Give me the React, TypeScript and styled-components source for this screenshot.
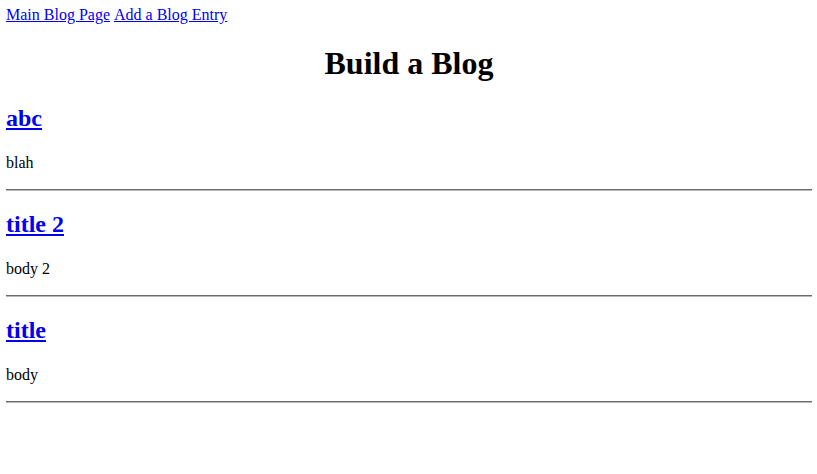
import React from "react";
import styled, { createGlobalStyle } from "styled-components";

const Global = createGlobalStyle`
  html, body { background: #fff; }
  body {
    margin: 6px 5px 6px 6px;
    font-family: "Liberation Serif", "Times New Roman", serif;
    font-size: 16px;
    color: #000;
  }
`;

const Nav = styled.nav`
  display: flex;
  gap: 4px;
  line-height: 18px;
`;

const NavLink = styled.a`
  color: #0000ee;
  text-decoration: underline;
`;

const Title = styled.h1`
  text-align: center;
  font-size: 32px;
  font-weight: bold;
  margin: 21px 0 22px;
  line-height: 37px;
`;

const Entry = styled.article`
  display: flex;
  flex-direction: column;
`;

const EntryTitle = styled.h2`
  font-size: 24px;
  font-weight: bold;
  margin: 0 0 22px;
  line-height: 28px;
  a { color: #0000ee; text-decoration: underline; }
`;

const EntryBody = styled.p`
  margin: 0 0 17px;
  line-height: 18px;
`;

const Rule = styled.hr`
  margin: 0 0 19px;
  border: none;
  border-top: 1px solid #6b6b6b;
  border-bottom: 1px solid #b8b8b8;
  height: 0;
`;

const posts = [
  { title: "abc", body: "blah" },
  { title: "title 2", body: "body 2" },
  { title: "title", body: "body" },
];

export default function App() {
  return (
    <>
      <Global />
      <Nav>
        <NavLink href="#">Main Blog Page</NavLink>
        <NavLink href="#">Add a Blog Entry</NavLink>
      </Nav>
      <Title>Build a Blog</Title>
      {posts.map((p) => (
        <Entry key={p.title}>
          <EntryTitle>
            <a href="#">{p.title}</a>
          </EntryTitle>
          <EntryBody>{p.body}</EntryBody>
          <Rule />
        </Entry>
      ))}
    </>
  );
}
